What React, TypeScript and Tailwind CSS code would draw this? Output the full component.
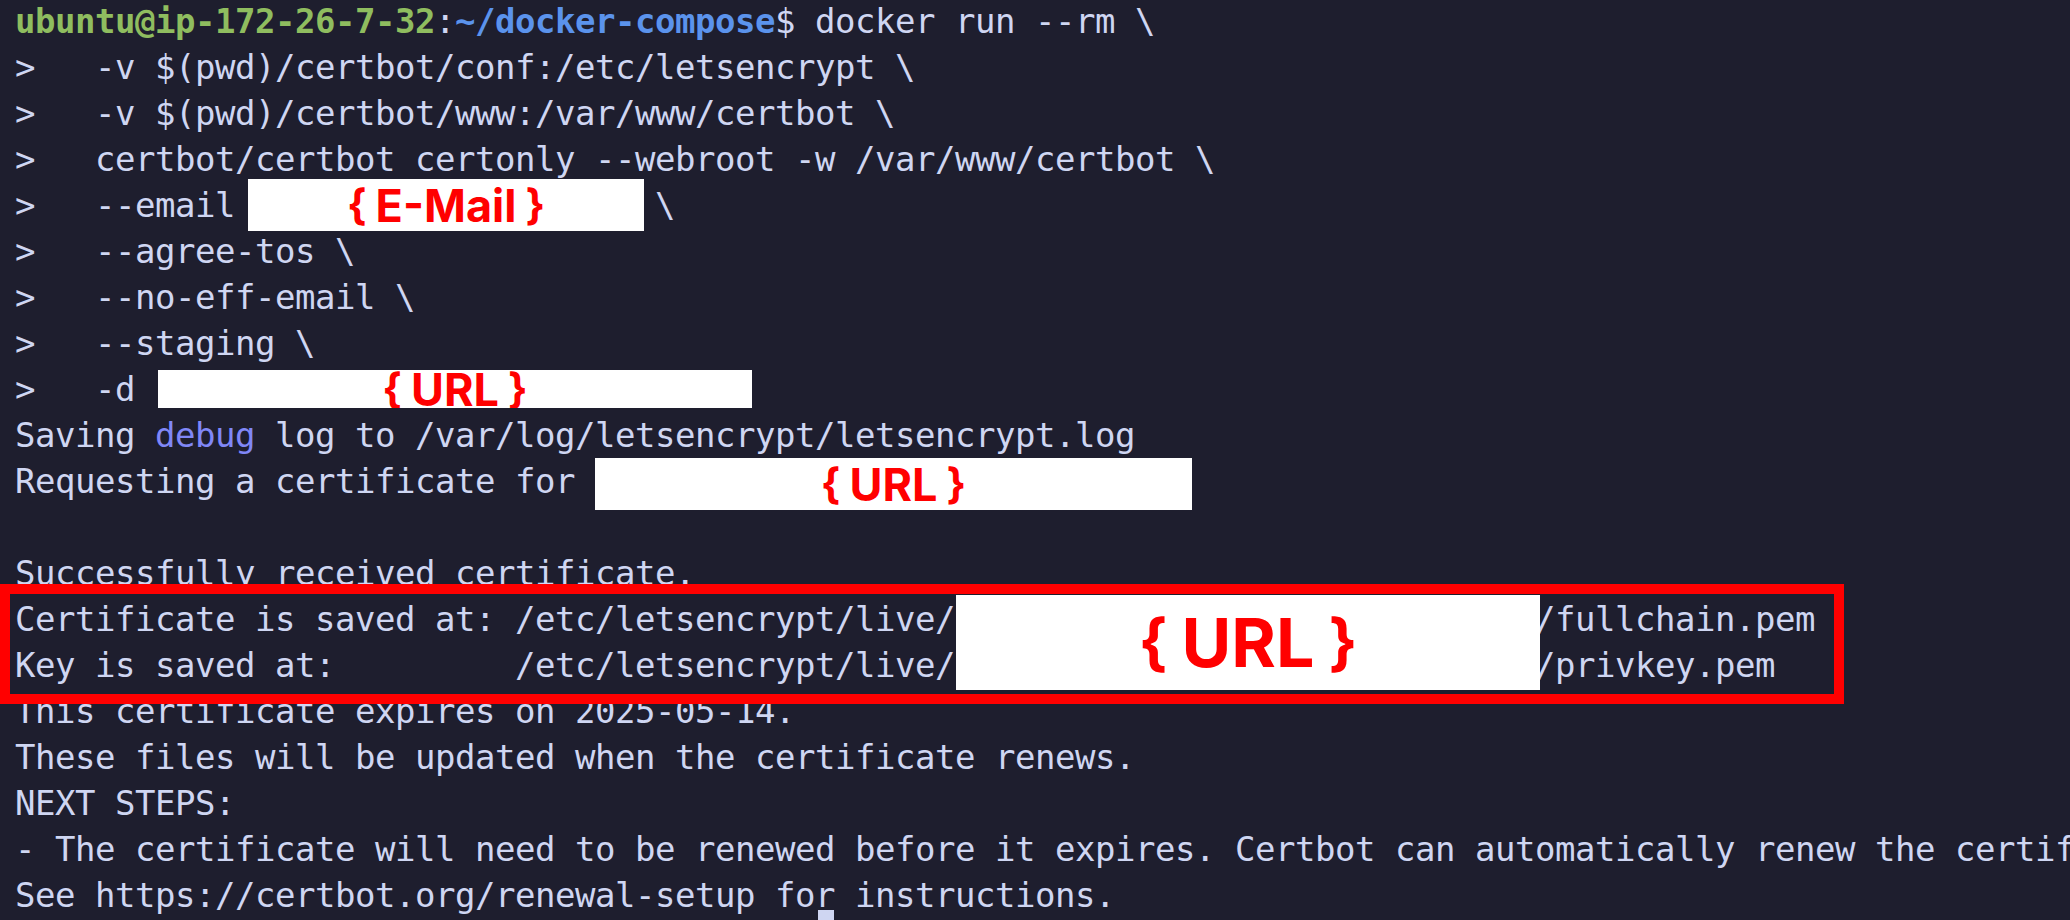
import React from "react";

const GREEN = "text-[#8fbd5f]";
const BLUE = "text-[#5b93ec]";
const DEBUG = "text-[#8087f7]";

// one terminal row, 46px tall
function Row({ children }: { children?: React.ReactNode }) {
  return <div className="flex h-[46px] items-center whitespace-pre">{children}</div>;
}

// white redaction sticker pasted over the screenshot
function Redact({ label, className, big }: { label: string; className: string; big?: boolean }) {
  const brace = big ? "text-[62px]" : "text-[42px]";
  return (
    <div
      className={`relative flex shrink-0 items-center justify-center overflow-hidden bg-white font-bold tracking-normal text-[#ff0000] font-['Inter','Noto_Sans',sans-serif] ${className}`}
    >
      <span className={`flex items-center leading-none ${big ? "gap-[14px] text-[68px]" : "gap-[9px] text-[45px]"}`}>
        <span className={brace}>{"{"}</span>
        <span>{label}</span>
        <span className={brace}>{"}"}</span>
      </span>
    </div>
  );
}

export default function App() {
  return (
    <div className="h-[920px] w-full overflow-hidden bg-[#1e1e2e]">
      <div className="-mt-[2px] pl-[15px] font-['DejaVu_Sans_Mono','Liberation_Mono',monospace] text-[34px] leading-[46px] tracking-[-0.47px] text-[#cfd6f2]">
        <Row>
          <span className={`font-bold ${GREEN}`}>ubuntu@ip-172-26-7-32</span>
          <span>:</span>
          <span className={`font-bold ${BLUE}`}>~/docker-compose</span>
          <span>$ docker run --rm \</span>
        </Row>
        <Row>{">   -v $(pwd)/certbot/conf:/etc/letsencrypt \\"}</Row>
        <Row>{">   -v $(pwd)/certbot/www:/var/www/certbot \\"}</Row>
        <Row>{">   certbot/certbot certonly --webroot -w /var/www/certbot \\"}</Row>
        <Row>
          <span>{">   --email"}</span>
          <Redact label="E-Mail" className="ml-[13px] h-[52px] w-[396px]" />
          <span className="ml-[11px]">\</span>
        </Row>
        <Row>{">   --agree-tos \\"}</Row>
        <Row>{">   --no-eff-email \\"}</Row>
        <Row>{">   --staging \\"}</Row>
        <Row>
          <span>{">   -d"}</span>
          <Redact label="URL" className="ml-[23px] h-[38px] w-[594px]" />
        </Row>
        <Row>
          <span>Saving </span>
          <span className={DEBUG}>debug</span>
          <span> log to /var/log/letsencrypt/letsencrypt.log</span>
        </Row>
        <Row>
          <span>Requesting a certificate for</span>
          <Redact label="URL" className="ml-[20px] mt-[6px] h-[52px] w-[597px]" />
        </Row>
        <Row />
        <Row>Successfully received certificate.</Row>

        {/* red highlight frame around the saved paths */}
        <div className="relative -mb-[16px] -ml-[15px] -mt-[12px] w-[1844px] border-[10px] border-[#ff0000] pb-[6px] pl-[5px] pt-[2px]">
          <div className="flex items-center">
            <div className="flex flex-col">
              <Row>Certificate is saved at: /etc/letsencrypt/live/</Row>
              <Row>{"Key is saved at:         /etc/letsencrypt/live/"}</Row>
            </div>
            <Redact label="URL" big className="-my-[2px] ml-[1px] h-[95px] w-[584px]" />
            <div className="-ml-[5px] flex flex-col">
              <Row>/fullchain.pem</Row>
              <Row>/privkey.pem</Row>
            </div>
          </div>
        </div>

        <Row>This certificate expires on 2025-05-14.</Row>
        <Row>These files will be updated when the certificate renews.</Row>
        <Row>NEXT STEPS:</Row>
        <Row>
          - The certificate will need to be renewed before it expires. Certbot can automatically renew the
          certificate in the background.
        </Row>
        <Row>See https://certbot.org/renewal-setup for instructions.</Row>
        <div className="-mt-[8px] ml-[803px] h-[10px] w-[16px] bg-[#cfd6f2]" />
      </div>
    </div>
  );
}
